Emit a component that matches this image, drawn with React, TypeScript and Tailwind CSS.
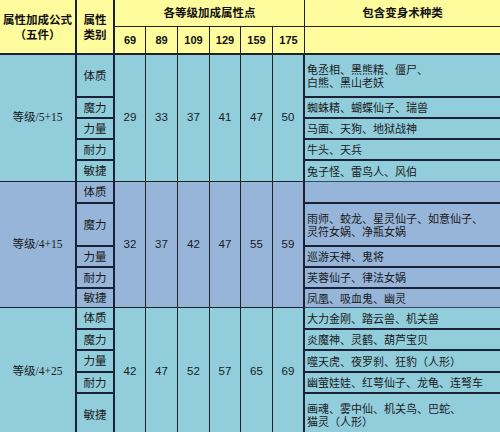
import React from "react";

const rowStart = [
  "",
  "row-start-1",
  "row-start-2",
  "row-start-3",
  "row-start-4",
  "row-start-5",
  "row-start-6",
  "row-start-7",
  "row-start-8",
  "row-start-9",
  "row-start-10",
  "row-start-11",
  "row-start-12",
  "row-start-13",
  "row-start-14",
  "row-start-15",
  "row-start-16",
  "row-start-17",
];
const colStart = [
  "",
  "col-start-1",
  "col-start-2",
  "col-start-3",
  "col-start-4",
  "col-start-5",
  "col-start-6",
  "col-start-7",
  "col-start-8",
  "col-start-9",
];

const labels = ["体质", "魔力", "力量", "耐力", "敏捷"];

type Group = {
  start: number;
  bg: string;
  formula: string;
  nums: string[];
  right: string[];
};

const groups: Group[] = [
  {
    start: 3,
    bg: "bg-[#92cddc]",
    formula: "等级/5+15",
    nums: ["29", "33", "37", "41", "47", "50"],
    right: [
      "龟丞相、黑熊精、僵尸、\n白熊、黑山老妖",
      "蜘蛛精、蝴蝶仙子、瑞兽",
      "马面、天狗、地狱战神",
      "牛头、天兵",
      "兔子怪、雷鸟人、风伯",
    ],
  },
  {
    start: 8,
    bg: "bg-[#97b5d9]",
    formula: "等级/4+15",
    nums: ["32", "37", "42", "47", "55", "59"],
    right: [
      "",
      "雨师、蛟龙、星灵仙子、如意仙子、\n灵符女娲、净瓶女娲",
      "巡游天神、鬼将",
      "芙蓉仙子、律法女娲",
      "凤凰、吸血鬼、幽灵",
    ],
  },
  {
    start: 13,
    bg: "bg-[#92cddc]",
    formula: "等级/4+25",
    nums: ["42", "47", "52", "57", "65", "69"],
    right: [
      "大力金刚、踏云兽、机关兽",
      "炎魔神、灵鹤、葫芦宝贝",
      "噬天虎、夜罗刹、狂豹（人形）",
      "幽萤娃娃、红萼仙子、龙龟、连弩车",
      "画魂、雾中仙、机关鸟、巴蛇、\n猫灵（人形）",
    ],
  },
];

const CJK = "font-['Noto_Sans_CJK_SC',sans-serif]";
const SERIFMIX = "font-['Liberation_Serif','Noto_Sans_CJK_SC',serif]";
const NUM = "font-['Liberation_Sans',Arial,sans-serif]";

export default function App() {
  const cells: React.ReactNode[] = [];
  const hdr = "bg-[#fefc9c] flex items-center justify-center text-[#111] font-bold";

  cells.push(
    <div
      key="h1"
      className={`${hdr} col-start-1 row-start-1 row-span-2 border-r-2 border-b-2 border-[#1b2238] flex-col leading-[15px] text-[11.5px] ${CJK}`}
    >
      <span>属性加成公式</span>
      <span>（五件）</span>
    </div>
  );
  cells.push(
    <div
      key="h2"
      className={`${hdr} col-start-2 row-start-1 row-span-2 border-r-2 border-b-2 border-[#1b2238] flex-col leading-[15px] text-[11.5px] ${CJK}`}
    >
      <span>属性</span>
      <span>类别</span>
    </div>
  );
  cells.push(
    <div
      key="h3"
      className={`${hdr} col-start-3 col-span-6 row-start-1 border-r border-b border-[#222] text-[11.5px] ${CJK}`}
    >
      各等级加成属性点
    </div>
  );
  cells.push(
    <div
      key="h4"
      className={`${hdr} col-start-9 row-start-1 border-b border-[#222] text-[11.5px] ${CJK}`}
    >
      包含变身术种类
    </div>
  );
  ["69", "89", "109", "129", "159", "175"].forEach((n, i) => {
    cells.push(
      <div
        key={"hn" + i}
        className={`${hdr} ${colStart[i + 3]} row-start-2 border-r border-b-2 border-[#222] text-[11px] ${NUM}`}
      >
        {n}
      </div>
    );
  });
  cells.push(
    <div key="h5" className={`${hdr} col-start-9 row-start-2 border-b-2 border-[#222]`} />
  );

  groups.forEach((g, gi) => {
    cells.push(
      <div
        key={`f${gi}`}
        className={`${g.bg} col-start-1 ${rowStart[g.start]} row-span-5 border-r-2 border-b border-[#1b2238] flex items-center justify-center text-[11.5px] text-[#1a1a1a] ${SERIFMIX}`}
      >
        {g.formula}
      </div>
    );
    g.nums.forEach((n, i) => {
      cells.push(
        <div
          key={`n${gi}-${i}`}
          className={`${g.bg} ${colStart[i + 3]} ${rowStart[g.start]} row-span-5 ${
            i === 5 ? "border-r-2 border-[#1b2238]" : "border-r border-[#222]"
          } border-b flex items-center justify-center text-[11.5px] text-[#1a1a1a] ${NUM}`}
        >
          {n}
        </div>
      );
    });
    labels.forEach((l, i) => {
      cells.push(
        <div
          key={`l${gi}-${i}`}
          className={`${g.bg} col-start-2 ${rowStart[g.start + i]} border-r-2 ${
            i === 4 ? "border-b" : "border-b-2"
          } border-[#1b2238] flex items-center justify-center text-[11.5px] text-[#1a1a1a] ${CJK}`}
        >
          {l}
        </div>
      );
    });
    g.right.forEach((t, i) => {
      cells.push(
        <div
          key={`r${gi}-${i}`}
          className={`${g.bg} col-start-9 ${rowStart[g.start + i]} ${
            i === 4 ? "border-b border-[#3a4560]" : "border-b-2 border-[#1b2238]"
          } flex items-center pl-[2px] text-[11px] leading-[13px] text-[#1a1a1a] whitespace-pre ${CJK}`}
        >
          {t}
        </div>
      );
    });
  });

  return (
    <div className="w-[500px] h-[432px] overflow-hidden bg-white">
      <div className="grid w-[500px] grid-cols-[77px_38px_31px_32px_32px_31px_32px_32px_195px] grid-rows-[27px_28px_43px_21px_21px_21px_21px_22px_43px_21px_21px_19px_22px_21px_22px_21px_42px]">
        {cells}
      </div>
    </div>
  );
}
